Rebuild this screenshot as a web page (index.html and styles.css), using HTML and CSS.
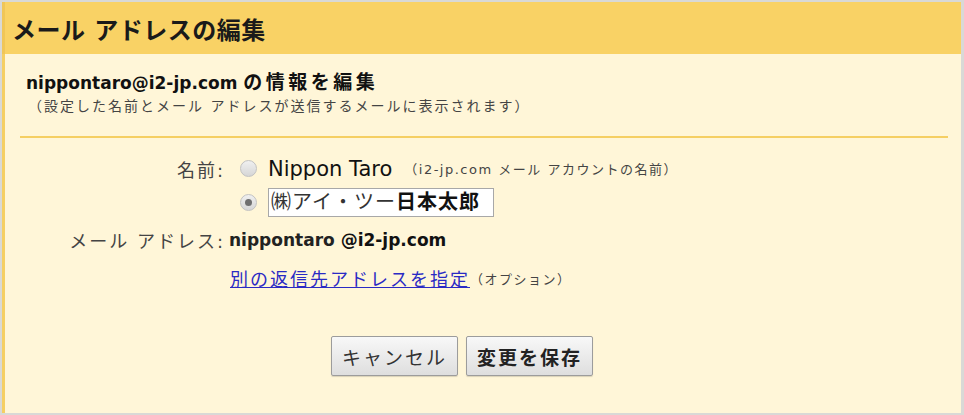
FILE: index.html
```html
<!DOCTYPE html>
<html lang="ja">
<head>
    <meta charset="UTF-8">
    <title>メール アドレスの編集</title>
    <link rel="stylesheet" href="styles.css">
</head>
<body>
    <div class="frame">
        <div class="header">
            <h1>メール アドレスの編集</h1>
        </div>
        <div class="panel">
            <h2>nippontaro@i2-jp.com <span class="jp">の情報を編集</span></h2>
            <p class="note">（設定した名前とメール アドレスが送信するメールに表示されます）</p>
            <div class="rule"></div>

            <div class="form">
                <div class="label">名前:</div>
                <div class="field">
                    <span class="radio"></span>
                    <span class="name">Nippon Taro</span>
                    <span class="small">（i2-jp.com メール アカウントの名前）</span>
                </div>

                <div class="label"></div>
                <div class="field">
                    <span class="radio checked"></span>
                    <div class="textbox">㈱アイ・ツー<b>日本太郎</b></div>
                </div>

                <div class="label">メール アドレス:</div>
                <div class="field">
                    <span class="addr">nippontaro <b>@i2-jp.com</b></span>
                </div>

                <div class="label"></div>
                <div class="field">
                    <a href="#" class="link">別の返信先アドレスを指定</a>
                    <span class="small">（オプション）</span>
                </div>
            </div>

            <div class="buttons">
                <button class="btn">キャンセル</button>
                <button class="btn save">変更を保存</button>
            </div>
        </div>
    </div>
</body>
</html>
```

FILE: styles.css
```css
* {
    margin: 0;
    padding: 0;
    box-sizing: border-box;
}

body {
    background-color: #d9d9d6;
    font-family: "DejaVu Sans", "Noto Sans CJK JP", sans-serif;
    color: #222;
}

.frame {
    width: 964px;
    height: 415px;
    padding: 2px 3px 2px 2px;
    display: flex;
    flex-direction: column;
}

.header {
    height: 52px;
    background-color: #f9d265;
    border-left: 3px solid #f0c658;
    padding-left: 7px;
    display: flex;
    align-items: center;
}

.header h1 {
    font-size: 24px;
    font-weight: bold;
    color: #1a1a1a;
    letter-spacing: 0.5px;
}

.panel {
    flex: 1;
    background-color: #fff6d8;
    border-left: 3px solid #f5cf63;
    padding: 17px 13px 0 15px;
}

.panel h2 {
    font-size: 17px;
    font-weight: bold;
    line-height: 22px;
    margin-left: 6px;
    color: #111;
}

.panel h2 .jp {
    font-size: 19px;
    letter-spacing: 3.5px;
}

.note {
    font-size: 14px;
    letter-spacing: 2px;
    line-height: 18px;
    margin-top: 3px;
    margin-left: 8px;
    color: #444;
}

.rule {
    height: 2px;
    background-color: #f5cf63;
    margin-top: 21px;
}

.form {
    display: grid;
    grid-template-columns: 205px 1fr;
    grid-template-rows: 33px 35px 40px 36px;
    column-gap: 13px;
    margin-top: 14px;
}

.label {
    display: flex;
    align-items: center;
    justify-content: flex-end;
    font-size: 18px;
    letter-spacing: 2px;
    color: #444;
}

.field {
    display: flex;
    align-items: center;
}

.radio {
    width: 17px;
    height: 17px;
    border-radius: 50%;
    border: 1px solid #c2c2c2;
    background: linear-gradient(#f0f0f0, #d6d6d6);
    margin-left: 2px;
    margin-right: 11px;
    position: relative;
}

.radio.checked::after {
    content: "";
    position: absolute;
    left: 4px;
    top: 4px;
    width: 7px;
    height: 7px;
    border-radius: 50%;
    background-color: #6f6f6f;
}

.name {
    font-size: 21px;
    color: #111;
    margin-right: 12px;
}

.small {
    font-size: 13px;
    letter-spacing: 1.5px;
    color: #444;
}

.textbox {
    width: 226px;
    height: 29px;
    border: 1px solid #a8a8a8;
    background-color: #fff;
    font-size: 20px;
    letter-spacing: 1px;
    line-height: 27px;
    padding-left: 2px;
    color: #333;
    white-space: nowrap;
    overflow: hidden;
}

.textbox b {
    color: #111;
}

.addr {
    font-size: 17px;
    font-weight: bold;
    color: #222;
    margin-left: -9px;
}

.addr b {
    color: #111;
}

.link {
    font-size: 18px;
    letter-spacing: 2px;
    color: #2a2ac4;
    text-decoration: underline;
    margin-left: -8px;
}

.buttons {
    display: flex;
    gap: 8px;
    margin-top: 40px;
    margin-left: 311px;
}

.btn {
    width: 127px;
    height: 40px;
    font-family: "DejaVu Sans", "Noto Sans CJK JP", sans-serif;
    font-size: 19px;
    letter-spacing: 2px;
    color: #333;
    border: 1px solid #9c9c9c;
    border-radius: 2px;
    background: linear-gradient(#f8f8f8, #dedede);
    box-shadow: 0 1px 1px rgba(0, 0, 0, 0.15);
}

.btn.save {
    font-weight: bold;
    color: #222;
}
```
